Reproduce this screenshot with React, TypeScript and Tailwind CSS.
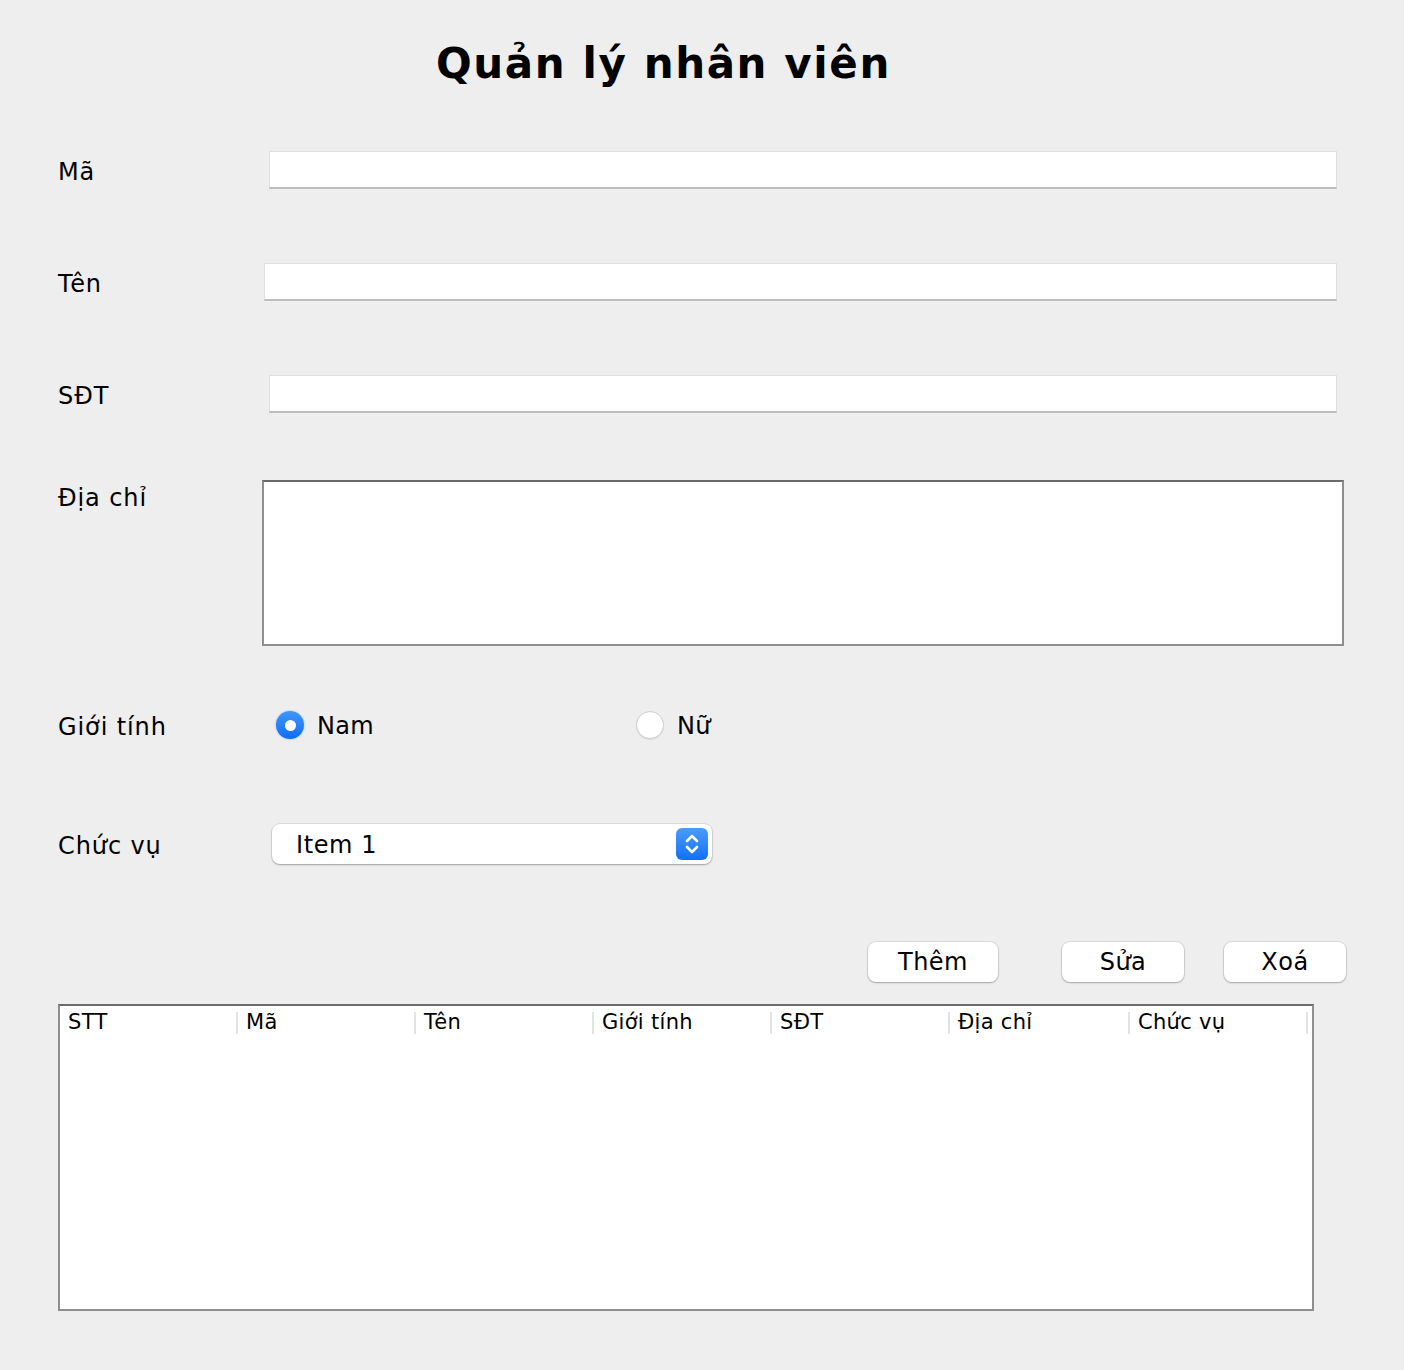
const columns = ["STT", "Mã", "Tên", "Giới tính", "SĐT", "Địa chỉ", "Chức vụ"];

function TextField({ offset, width }: { offset: string; width: string }) {
  return (
    <div
      className={`${offset} ${width} h-[38px] bg-white border border-[#dedede] border-b-[2px] border-b-[#bdbdbd]`}
    />
  );
}

function Label({ text }: { text: string }) {
  return <span className="w-[204px] pt-[3px] text-[24px] tracking-[0.9px]">{text}</span>;
}

function Radio({ checked }: { checked?: boolean }) {
  if (checked) {
    return (
      <div className="flex h-[28px] w-[28px] items-center justify-center rounded-full bg-gradient-to-b from-[#3f95fb] to-[#0a6ef6] shadow-[0_0_2px_rgba(10,110,246,0.5)]">
        <div className="h-[11px] w-[11px] rounded-full bg-white" />
      </div>
    );
  }
  return (
    <div className="h-[28px] w-[28px] rounded-full border border-[#cfcfcf] bg-white shadow-[0_1px_1px_rgba(0,0,0,0.08)]" />
  );
}

function MacButton({ label, width }: { label: string; width: string }) {
  return (
    <button
      className={`${width} h-[40px] rounded-[8px] bg-white text-[24px] leading-none tracking-[0.5px] text-black shadow-[0_0_0_1px_rgba(0,0,0,0.08),0_1px_2px_rgba(0,0,0,0.25)]`}
    >
      {label}
    </button>
  );
}

export default function App() {
  return (
    <div
      className="min-h-[1370px] w-[1404px] bg-[#eeeeee] pl-[58px] text-black"
      style={{ fontFamily: '"DejaVu Sans", "Noto Sans", sans-serif' }}
    >
      {/* Title */}
      <div className="flex h-[126px] items-center pl-[378px]">
        <h1 className="text-[42px] font-bold tracking-[1.6px]">Quản lý nhân viên</h1>
      </div>

      {/* Mã */}
      <div className="mt-[25px] flex h-[38px] items-center">
        <Label text="Mã" />
        <TextField offset="ml-[7px]" width="w-[1068px]" />
      </div>

      {/* Tên */}
      <div className="mt-[74px] flex h-[38px] items-center">
        <Label text="Tên" />
        <TextField offset="ml-[2px]" width="w-[1073px]" />
      </div>

      {/* SĐT */}
      <div className="mt-[74px] flex h-[38px] items-center">
        <Label text="SĐT" />
        <TextField offset="ml-[7px]" width="w-[1068px]" />
      </div>

      {/* Địa chỉ */}
      <div className="mt-[67px] flex items-start">
        <span className="mt-[3px] w-[204px] text-[24px] leading-[30px] tracking-[0.9px]">Địa chỉ</span>
        <div className="h-[166px] w-[1082px] border-[2px] border-[#8e8e8e] border-t-[#6c6c6c] bg-white" />
      </div>

      {/* Giới tính */}
      <div className="mt-[59px] flex h-[40px] items-center">
        <Label text="Giới tính" />
        <div className="ml-[14px] flex w-[360px] items-center gap-[13px]">
          <Radio checked />
          <span className="pt-[2px] text-[24px] tracking-[0.3px]">Nam</span>
        </div>
        <div className="flex items-center gap-[13px]">
          <Radio />
          <span className="pt-[2px] text-[24px] tracking-[0.3px]">Nữ</span>
        </div>
      </div>

      {/* Chức vụ */}
      <div className="mt-[79px] flex h-[40px] items-center">
        <Label text="Chức vụ" />
        <div className="ml-[10px] flex h-[40px] w-[440px] items-center justify-between rounded-[8px] bg-white pl-[24px] pr-[4px] shadow-[0_0_0_1px_rgba(0,0,0,0.07),0_1px_2px_rgba(0,0,0,0.28)]">
          <span className="pt-[2px] text-[24px] tracking-[0.6px]">Item 1</span>
          <div className="flex h-[32px] w-[32px] items-center justify-center rounded-[6px] bg-gradient-to-b from-[#4a9cfa] to-[#0f6ff5]">
            <svg width="16" height="24" viewBox="0 0 16 24" fill="none" stroke="white" strokeWidth="2.6" strokeLinecap="round" strokeLinejoin="round">
              <path d="M3 9 L8 4 L13 9" />
              <path d="M3 15 L8 20 L13 15" />
            </svg>
          </div>
        </div>
      </div>

      {/* Buttons */}
      <div className="mt-[78px] flex h-[40px] items-center pl-[810px]">
        <MacButton label="Thêm" width="w-[130px]" />
        <div className="ml-[64px]">
          <MacButton label="Sửa" width="w-[122px]" />
        </div>
        <div className="ml-[40px]">
          <MacButton label="Xoá" width="w-[122px]" />
        </div>
      </div>

      {/* Table */}
      <div className="mt-[22px] h-[307px] w-[1256px] border-[2px] border-[#8e8e8e] border-t-[#6c6c6c] bg-white">
        <div className="flex h-[34px] items-center">
          {columns.map((c, i) => (
            <div
              key={c}
              className={`flex h-[22px] items-center border-r-[2px] border-[#e3e3e3] pl-[8px] text-[21px] tracking-[0.3px] ${
                i === 5 ? "w-[180px]" : "w-[178px]"
              }`}
            >
              {c}
            </div>
          ))}
        </div>
      </div>
    </div>
  );
}
